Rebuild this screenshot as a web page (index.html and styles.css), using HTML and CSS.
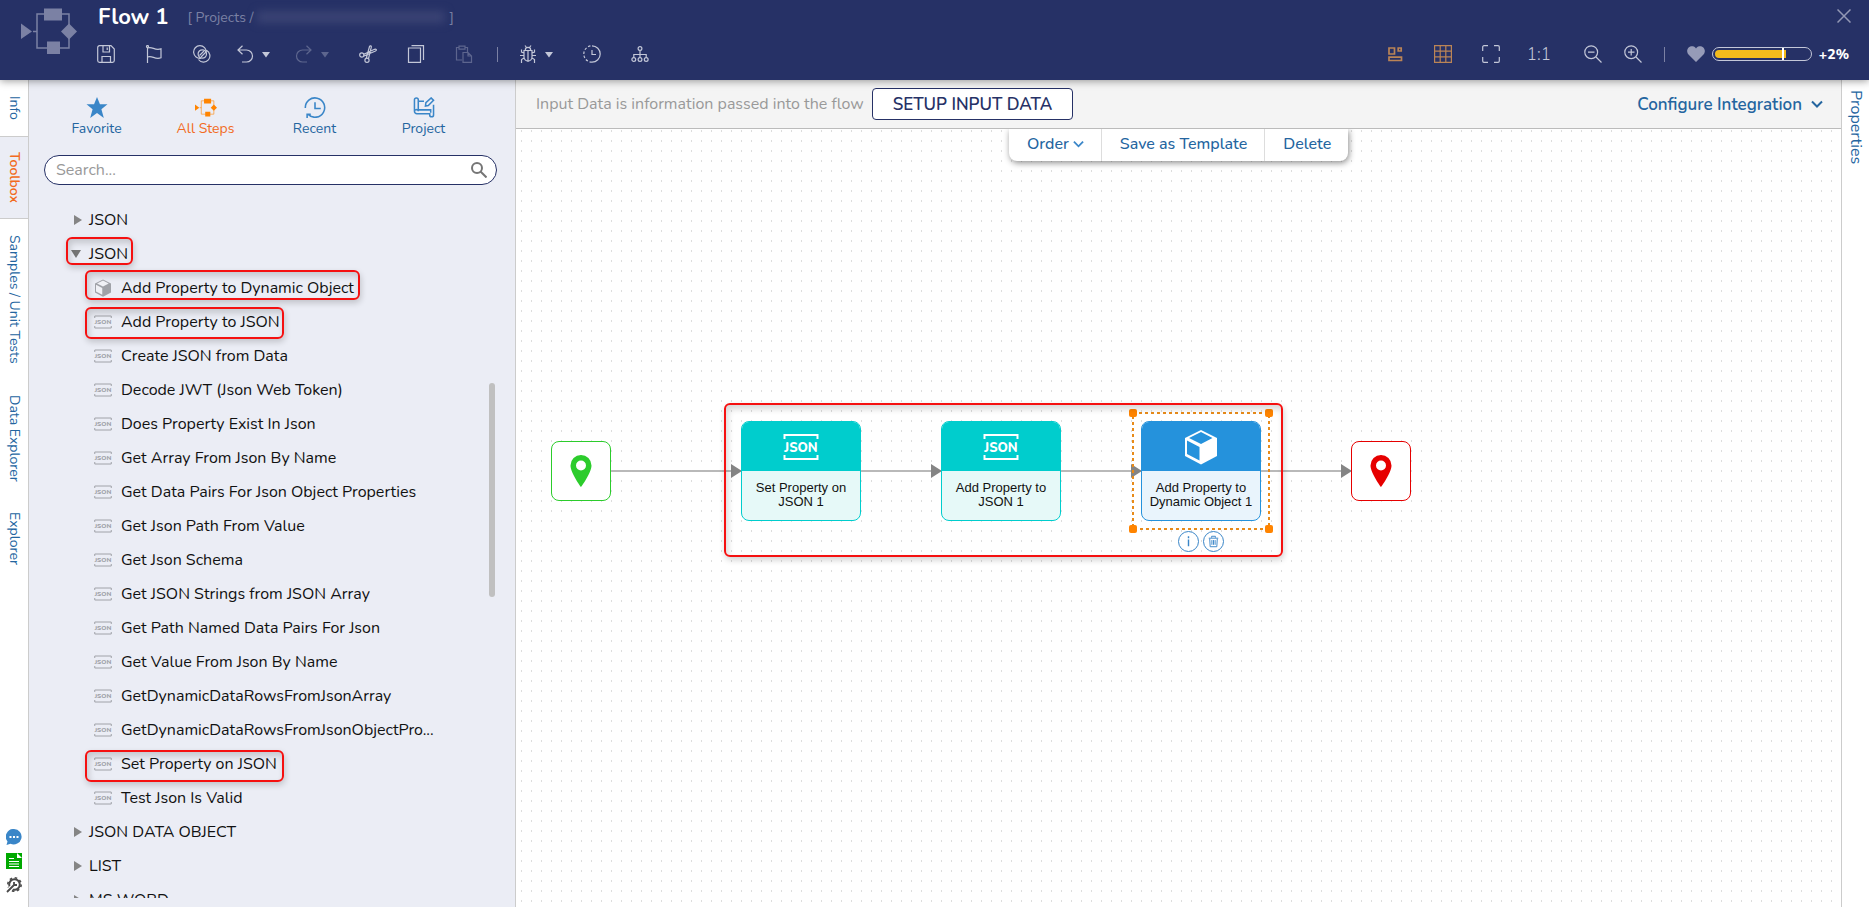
FILE: index.html
```html
<!DOCTYPE html>
<html lang="en">
<head>
  <meta charset="UTF-8">
  <title>Flow 1</title>
  <meta name="viewport" content="width=device-width, initial-scale=1.0">
  <link rel="stylesheet" href="styles.css">
</head>
<body>
  <!-- shared icons -->
  <svg class="sprite" aria-hidden="true">
    <symbol id="i-flow" viewBox="0 0 56 46">
      <path d="M12 23.500H16V6H48V40H16V23" fill="none" stroke="currentColor" stroke-width="1.500"/>
      <path d="M0 15.500 11 23.500 0 31zM23 .5h18v12H23zM26 33.500h13V46H26zM48 15.500l8 8-8 8-8-8z" fill="currentColor"/>
    </symbol>
    <symbol id="i-json" viewBox="0 0 36 28">
      <path d="M1.500 6V2H34.500V6M1.500 22V26H34.500V22" fill="none" stroke="currentColor" stroke-width="2"/>
      <text x="18" y="18.500" text-anchor="middle" font-size="13" font-weight="800" fill="currentColor">JSON</text>
    </symbol>
    <symbol id="i-cube" viewBox="0 0 36 36">
      <path d="M18 1 34 9V27L18 35.500 2 27V9z" fill="currentColor"/>
      <path class="cube-face" d="M18 3 29.500 9 18 15 6 9zM4 11.500 16.500 18V31.500L4 25z"/>
    </symbol>
    <symbol id="i-caret" viewBox="0 0 10 7"><path d="M1 1h8L5 6.500z" fill="currentColor"/></symbol>
    <symbol id="i-chevron" viewBox="0 0 12 8"><path d="M1 1.500 6 6.500 11 1.500" fill="none" stroke="currentColor" stroke-width="2"/></symbol>
    <symbol id="i-pin" viewBox="0 0 22 32"><path fill-rule="evenodd" d="M11 0A10.500 10.500 0 0 0 .5 10.500C.5 18 11 32 11 32S21.500 18 21.500 10.500A10.500 10.500 0 0 0 11 0zM11 5.500a5 5 0 1 1 0 10 5 5 0 0 1 0-10z" fill="currentColor"/></symbol>
  </svg>

  <header class="header">
    <svg class="logo"><use href="#i-flow"/></svg>
    <div class="header-main">
      <div class="title-row">
        <h1>Flow 1</h1>
        <div class="breadcrumb">[ Projects / <span class="redacted"></span> ]</div>
        <button class="close-btn" aria-label="Close"><svg viewBox="0 0 14 14"><path d="M.5.5l13 13M13.500.5l-13 13"/></svg></button>
      </div>

      <div class="toolbar">
        <button class="tool" aria-label="Save"><svg viewBox="0 0 18 18"><path d="M.7 2.500A1.800 1.800 0 0 1 2.500.7H14l3.300 3.300v11.500a1.800 1.800 0 0 1-1.800 1.800h-13a1.800 1.800 0 0 1-1.800-1.800zM6 .7V7h6.500V.7M10.200 2.500V5M5 17v-5.500h8.500V17"/></svg></button>
        <button class="tool" aria-label="Flag"><svg viewBox="0 0 18 18"><path d="M2.500 2v16M2.500 3c5-2 7 3 13.500.8v9c-6.500 2.200-8.500-2.800-13.500-.8"/><circle cx="2.500" cy="1.500" r="1"/></svg></button>
        <button class="tool" aria-label="Compare"><svg viewBox="0 0 18 18"><path d="M8 13.200A6.300 6.300 0 1 1 13.200 7.500M13.500 5.200A6.300 6.300 0 1 1 5.500 14.500"/><circle cx="9.300" cy="9" r="4.200"/><path d="M6.500 10.500l4.500-4.500M8 12l5-5"/></svg></button>
        <div class="tool-group">
          <button class="tool" aria-label="Undo"><svg viewBox="0 0 18 18"><path d="M6.500.8 2 5l4.500 4.200M2 5h8.500a6 6 0 0 1 0 12H6"/></svg></button>
          <button class="drop" aria-label="Undo history"><svg><use href="#i-caret"/></svg></button>
        </div>
        <div class="tool-group">
          <button class="tool" aria-label="Redo" disabled><svg viewBox="0 0 18 18"><path d="M11.500.8 16 5l-4.500 4.200M16 5H7.500a6 6 0 0 0 0 12H12"/></svg></button>
          <button class="drop" aria-label="Redo history" disabled><svg><use href="#i-caret"/></svg></button>
        </div>
        <button class="tool" aria-label="Cut"><svg viewBox="0 0 18 18"><circle cx="2.800" cy="10" r="2.100"/><circle cx="8" cy="15.200" r="2.100"/><path d="M4.800 9.300 15.500 4.300c1.800-.4 2.500.8 1 1.700L4.900 11M7.300 13.200 10.500 1.500c.6-1.300 2-.7 1.800.7L9.500 13.600"/></svg></button>
        <button class="tool" aria-label="Copy"><svg viewBox="0 0 18 18"><path d="M1.500 3h12v14.300h-12zM4.500.7h12V15"/></svg></button>
        <button class="tool" aria-label="Paste" disabled><svg viewBox="0 0 18 18"><path d="M7 15H1.500V2.500H4M10 2.500h2.500V7M4 1.200h6v3H4zM8 7.500h5l3.500 3.500v6.300H8zM13 7.500V11h3.500"/></svg></button>
        <span class="sep"></span>
        <div class="tool-group">
          <button class="tool" aria-label="Debug"><svg viewBox="0 0 18 18"><path d="M9 5v12M5 5.500h8v6.500a4 4 0 0 1-8 0zM6.300 5a2.700 2.700 0 0 1 5.400 0M6 .5l1.500 2M12 .5l-1.500 2M5 8 2.500 7V4.500M5 10.500H1M5 13l-2.500 1.500V18M13 8l2.500-1V4.500M13 10.500h4M13 13l2.500 1.500V18"/></svg></button>
          <button class="drop" aria-label="Debug options"><svg><use href="#i-caret"/></svg></button>
        </div>
        <button class="tool" aria-label="History"><svg viewBox="0 0 18 18"><path d="M9 .8a8.200 8.200 0 0 1 0 16.400"/><path d="M9 17.200A8.200 8.200 0 0 1 9 .8" stroke-dasharray="2.500 1.800"/><path d="M9 5v4.500h4"/></svg></button>
        <button class="tool" aria-label="Dependencies"><svg viewBox="0 0 18 18"><circle cx="9" cy="3.500" r="1.900"/><circle cx="2.800" cy="14.500" r="1.900"/><circle cx="9" cy="14.500" r="1.900"/><circle cx="15.200" cy="14.500" r="1.900"/><path d="M9 5.500v7M2.800 12.500V9.500h12.400v3"/></svg></button>

        <div class="toolbar-right">
          <button class="tool tool-on" aria-label="Layout"><svg viewBox="0 0 18 18"><path d="M3 3h5.500v6H3zM12.200 3h3v3h-3zM3 12.200h12.500V15.500H3z" stroke-width="1.700"/></svg></button>
          <button class="tool tool-on" aria-label="Grid"><svg viewBox="0 0 18 18"><path d="M.6.6h16.800v16.800H.6zM6.200.6v16.800M11.800.6v16.800M.6 6.200h16.800M.6 11.800h16.800"/></svg></button>
          <button class="tool" aria-label="Fit to screen"><svg viewBox="0 0 18 18"><path d="M.7 6V2A1.300 1.300 0 0 1 2 .7h4M12 .7h4A1.300 1.300 0 0 1 17.300 2v4M17.300 12v4a1.300 1.300 0 0 1-1.300 1.300h-4M6 17.300H2A1.300 1.300 0 0 1 .7 16v-4"/></svg></button>
          <button class="tool ratio">1:1</button>
          <div class="zoom-group">
            <button class="tool" aria-label="Zoom out"><svg viewBox="0 0 18 18"><circle cx="7.200" cy="7.200" r="6.400"/><path d="M12 12l5.500 5.500M4 7.200h6.500"/></svg></button>
            <button class="tool" aria-label="Zoom in"><svg viewBox="0 0 18 18"><circle cx="7.200" cy="7.200" r="6.400"/><path d="M12 12l5.500 5.500M4 7.200h6.500M7.200 4v6.500"/></svg></button>
          </div>
          <span class="sep"></span>
          <div class="health">
            <svg class="heart" viewBox="0 0 18 16"><path d="M9 16 1.500 8.500C-2 4 2-.5 6 .3 8 .8 9 2.500 9 2.500S10 .8 12 .3c4-.8 8 3.700 4.500 8.200z"/></svg>
            <div class="meter"><div class="meter-fill" style="width: 76%"></div></div>
            <span class="health-value">+2%</span>
          </div>
        </div>
      </div>
    </div>
  </header>

  <div class="workspace">
    <nav class="side-tabs">
      <button class="side-tab">Info</button>
      <button class="side-tab active">Toolbox</button>
      <button class="side-tab">Samples / Unit Tests</button>
      <button class="side-tab">Data Explorer</button>
      <button class="side-tab">Explorer</button>
      <div class="side-tools">
        <button aria-label="Chat"><svg viewBox="0 0 16 16"><path d="M8 0a8 7.700 0 1 1-3.500 14.800L.5 16l1-3.500A7.700 7.700 0 0 1 8 0z" fill="#3a86c8"/><path d="M3.500 8h2M7 8h2M10.500 8h2" stroke="#fff" stroke-width="2"/></svg></button>
        <button aria-label="Notes"><svg viewBox="0 0 16 16"><path d="M0 0h16v16H0z" fill="#00a900"/><path d="M11 0v5h5z" fill="#fff"/><path d="M3 5.500h5M3 8.500h10M3 11h10M3 13.500h10" stroke="#fff"/></svg></button>
        <button aria-label="Settings"><svg viewBox="0 0 16 16"><circle cx="8.500" cy="7.500" r="5.300" fill="none" stroke="#4a4a4a" stroke-width="2"/><circle cx="8.500" cy="7.500" r="6.700" fill="none" stroke="#4a4a4a" stroke-width="1.600" stroke-dasharray="2.600 2.660"/><path d="M.8 15.200 6 10" stroke="#fff" stroke-width="4.500"/><path d="M1 15 8.500 7.500M8 5v3h3" fill="none" stroke="#4a4a4a" stroke-width="1.800"/></svg></button>
      </div>
    </nav>

    <aside class="toolbox">
      <div class="filters">
        <button class="filter"><svg viewBox="0 0 20 20"><path d="M10 0l2.800 7H20l-5.800 4.700L16.500 20 10 15.200 3.500 20l2.300-8.300L0 7h7.200z" fill="currentColor"/></svg>Favorite</button>
        <button class="filter active"><svg><use href="#i-flow"/></svg>All Steps</button>
        <button class="filter"><svg viewBox="0 0 20 20"><path d="M.8 10.500A9.200 9.200 0 1 1 3.500 16.600M2.500 20v-3.500H6M10 5v6h5.500" fill="none" stroke="currentColor" stroke-width="1.500"/></svg>Recent</button>
        <button class="filter"><svg viewBox="0 0 22 22"><path d="M5 15V3a2 2 0 0 0-4 0v12a2.500 2.500 0 0 0 2.500 2.500H17v1.300a2 2 0 0 0 4 0V8M5 4.500h6M1 15a2 2 0 0 1 3-1.500h14v3M12.500 9.500 13 6l5.500-5 2.500 2.500L15.500 9z" fill="none" stroke="currentColor" stroke-width="1.600"/></svg>Project</button>
      </div>

      <div class="search">
        <input type="text" placeholder="Search..." aria-label="Search steps">
        <svg viewBox="0 0 16 16"><circle cx="6" cy="6" r="5"/><path d="M9.500 9.500l6 6"/></svg>
      </div>

      <div class="tree">
        <div class="folder">JSON</div>
        <div class="folder open">JSON</div>
        <div class="step"><svg class="cube"><use href="#i-cube"/></svg>Add Property to Dynamic Object</div>
        <div class="step"><svg><use href="#i-json"/></svg>Add Property to JSON</div>
        <div class="step"><svg><use href="#i-json"/></svg>Create JSON from Data</div>
        <div class="step"><svg><use href="#i-json"/></svg>Decode JWT (Json Web Token)</div>
        <div class="step"><svg><use href="#i-json"/></svg>Does Property Exist In Json</div>
        <div class="step"><svg><use href="#i-json"/></svg>Get Array From Json By Name</div>
        <div class="step"><svg><use href="#i-json"/></svg>Get Data Pairs For Json Object Properties</div>
        <div class="step"><svg><use href="#i-json"/></svg>Get Json Path From Value</div>
        <div class="step"><svg><use href="#i-json"/></svg>Get Json Schema</div>
        <div class="step"><svg><use href="#i-json"/></svg>Get JSON Strings from JSON Array</div>
        <div class="step"><svg><use href="#i-json"/></svg>Get Path Named Data Pairs For Json</div>
        <div class="step"><svg><use href="#i-json"/></svg>Get Value From Json By Name</div>
        <div class="step"><svg><use href="#i-json"/></svg>GetDynamicDataRowsFromJsonArray</div>
        <div class="step"><svg><use href="#i-json"/></svg>GetDynamicDataRowsFromJsonObjectPro...</div>
        <div class="step"><svg><use href="#i-json"/></svg>Set Property on JSON</div>
        <div class="step"><svg><use href="#i-json"/></svg>Test Json Is Valid</div>
        <div class="folder">JSON DATA OBJECT</div>
        <div class="folder">LIST</div>
        <div class="folder">MS WORD</div>
        <div class="callout callout-folder"></div>
        <div class="callout callout-dynamic"></div>
        <div class="callout callout-add"></div>
        <div class="callout callout-set"></div>
        <div class="scroll-thumb"></div>
      </div>
    </aside>

    <main class="designer">
      <div class="input-bar">
        <span class="hint">Input Data is information passed into the flow</span>
        <button class="setup-btn">SETUP INPUT DATA</button>
        <button class="configure-btn">Configure Integration <svg><use href="#i-chevron"/></svg></button>
      </div>

      <div class="canvas">
        <div class="context-bar">
          <button>Order <svg><use href="#i-chevron"/></svg></button>
          <button>Save as Template</button>
          <button>Delete</button>
        </div>

        <svg class="links">
          <path d="M95 342H225M345 342H425M545 342H625M745 342H835" stroke="#b9b9b9" stroke-width="2"/>
          <path d="M215 335l11 7-11 7zM415 335l11 7-11 7zM615 335l11 7-11 7zM825 335l11 7-11 7z" fill="#858585"/>
        </svg>

        <div class="terminal start"><svg><use href="#i-pin"/></svg></div>
        <div class="node node-set">
          <div class="node-head"><svg><use href="#i-json"/></svg></div>
          <div class="node-name">Set Property on<br>JSON 1</div>
        </div>
        <div class="node node-add">
          <div class="node-head"><svg><use href="#i-json"/></svg></div>
          <div class="node-name">Add Property to<br>JSON 1</div>
        </div>
        <div class="node node-dynamic">
          <div class="node-head"><svg class="cube"><use href="#i-cube"/></svg></div>
          <div class="node-name">Add Property to<br>Dynamic Object 1</div>
        </div>
        <div class="terminal end"><svg><use href="#i-pin"/></svg></div>

        <svg class="selection" viewBox="0 0 144 124">
          <rect x="4" y="4" width="136" height="116" fill="none" stroke="#e88b1a" stroke-width="2" stroke-dasharray="3 3"/>
          <g fill="#ff8400"><rect width="8" height="8" rx="2"/><rect x="136" width="8" height="8" rx="2"/><rect y="116" width="8" height="8" rx="2"/><rect x="136" y="116" width="8" height="8" rx="2"/></g>
        </svg>
        <div class="node-actions">
          <button aria-label="Info"><svg viewBox="0 0 20 20"><path d="M10 8v7M10 4.500v2" stroke-width="1.500"/></svg></button>
          <button aria-label="Delete step"><svg viewBox="0 0 20 20"><path d="M5 6.500h10M8 6V4.500h4V6M6 7l.5 8.500h7L14 7M8.300 8.500v5M10 8.500v5M11.700 8.500v5"/></svg></button>
        </div>
        <div class="callout callout-nodes"></div>
      </div>
    </main>

    <nav class="right-tabs">
      <button class="side-tab">Properties</button>
    </nav>
  </div>
</body>
</html>
```
FILE: styles.css
```css
* {
  box-sizing: border-box;
}
body {
  margin: 0;
  height: 100vh;
  display: flex;
  flex-direction: column;
  overflow: hidden;
  font-family: 'Nunito', 'Open Sans', sans-serif;
  font-size: 16px;
  color: #111;
}
button {
  border: none;
  background: none;
  padding: 0;
  margin: 0;
  font: inherit;
  color: inherit;
  cursor: pointer;
}
.sprite {
  position: absolute;
  width: 0;
  height: 0;
}

/* header */
.header {
  position: relative;
  z-index: 5;
  display: flex;
  height: 80px;
  flex: none;
  background: #263166;
  color: #c3c7d8;
  box-shadow: 0 1px 8px rgba(0, 0, 0, 0.4);
}
.logo {
  width: 56px;
  height: 46px;
  margin: 8px 5px 0 21px;
  color: #7b81a4;
}
.header-main {
  flex: 1;
}
.title-row {
  display: flex;
  align-items: center;
  height: 34px;
  padding: 0 18px 0 16px;
}
.title-row h1 {
  margin: 0;
  font-size: 22px;
  line-height: 34px;
  font-weight: 700;
  color: #fff;
}
.breadcrumb {
  display: flex;
  align-items: center;
  gap: 4px;
  margin-left: 19px;
  font-size: 14px;
  color: #7b81a4;
}
.redacted {
  width: 188px;
  height: 12px;
  background: #3a4374;
  filter: blur(4px);
}
.close-btn {
  width: 14px;
  height: 14px;
  margin: 0 0 2px auto;
}
.close-btn svg {
  display: block;
  fill: none;
  stroke: #9398b4;
  stroke-width: 1.5;
}
.toolbar {
  display: flex;
  align-items: center;
  height: 40px;
}
.tool {
  display: flex;
  align-items: center;
  justify-content: center;
  width: 48px;
  height: 40px;
}
.tool svg {
  width: 18px;
  height: 18px;
  fill: none;
  stroke: currentColor;
  stroke-width: 1.2;
}
.tool-on {
  color: #bb8456;
}
.tool:disabled, .drop:disabled {
  opacity: 0.35;
}
.tool-group {
  display: flex;
  align-items: center;
  width: 59px;
  padding-left: 10px;
  gap: 7px;
}
.tool-group .tool {
  width: 18px;
}
.drop svg {
  display: block;
  width: 10px;
  height: 7px;
}
.sep {
  width: 1px;
  height: 15px;
  margin: 0 11px 0 9px;
  background: #7b81a4;
}
.toolbar-right {
  display: flex;
  align-items: center;
  margin-left: auto;
  padding-right: 20px;
}
.toolbar-right .sep {
  margin: 0 22px 0 11px;
}
.ratio {
  font-size: 17px;
  font-weight: 300;
}
.zoom-group {
  display: flex;
  margin-left: 10px;
}
.zoom-group .tool {
  width: 40px;
}
.health {
  display: flex;
  align-items: center;
  gap: 7px;
}
.heart {
  width: 18px;
  height: 16px;
  fill: #969bb8;
}
.meter {
  width: 100px;
  height: 14px;
  padding: 2px;
  border: 1px solid #c3c7d8;
  border-radius: 7px;
}
.meter-fill {
  position: relative;
  height: 8px;
  background: #f3bb1c;
  border-radius: 4px 0 0 4px;
}
.meter-fill::after {
  content: '';
  position: absolute;
  right: 2px;
  top: -2px;
  width: 2px;
  height: 12px;
  background: #fff;
}
.health-value {
  font-size: 14px;
  font-weight: 800;
  color: #fff;
}

/* workspace */
.workspace {
  flex: 1;
  min-height: 0;
  display: flex;
}
.side-tabs {
  display: flex;
  flex-direction: column;
  gap: 1px;
  width: 29px;
  padding-top: 1px;
  border-right: 1px solid #ccc;
}
.side-tab {
  writing-mode: vertical-rl;
  width: 28px;
  padding: 15px 0;
  font-size: 14px;
  line-height: 26px;
  color: #24659f;
  text-align: left;
}
.side-tab.active {
  background: #ebedf5;
  border-top: 1px solid #ccc;
  border-bottom: 1px solid #ccc;
  color: #f26a21;
  font-weight: 600;
}
.side-tools {
  display: flex;
  flex-direction: column;
  align-items: center;
  gap: 8px;
  margin-top: auto;
  padding-bottom: 14px;
}
.side-tools button {
  width: 16px;
  height: 16px;
}
.side-tools svg {
  display: block;
}
.toolbox {
  display: flex;
  flex-direction: column;
  width: 487px;
  padding-bottom: 9px;
  background: #ebedf5;
  border-right: 1px solid #ccc;
}
.filters {
  display: flex;
  padding: 17px 37px 0 13px;
}
.filter {
  flex: 1;
  display: flex;
  flex-direction: column;
  align-items: center;
  gap: 1px;
  font-size: 14px;
  line-height: 20px;
  color: #24659f;
}
.filter svg {
  width: 22px;
  height: 21px;
  color: #3a86c8;
}
.filter.active {
  color: #f26a21;
}
.filter.active svg {
  color: #ff8400;
}
.search {
  position: relative;
  margin: 16px 18px 18px 15px;
}
.search input {
  display: block;
  width: 100%;
  height: 30px;
  padding: 0 40px 0 11px;
  border: 1px solid #263166;
  border-radius: 15px;
  font: inherit;
  background: #fff;
}
.search input::placeholder {
  color: #999;
}
.search svg {
  position: absolute;
  right: 10px;
  top: 7px;
  width: 16px;
  height: 16px;
  fill: none;
  stroke: #757575;
  stroke-width: 2;
}
.tree {
  position: relative;
  flex: 1;
  min-height: 0;
  overflow: hidden;
}
.folder, .step {
  display: flex;
  align-items: center;
  height: 34px;
  white-space: nowrap;
}
.folder {
  padding-left: 45px;
}
.folder::before {
  content: '';
  width: 0;
  margin-right: 7px;
  border: 5px solid transparent;
  border-left: 8px solid #858585;
  border-right: 0;
}
.folder.open {
  padding-left: 42px;
}
.folder.open::before {
  border: 5px solid transparent;
  border-top: 8px solid #757575;
  border-bottom: 0;
  margin-right: 8px;
}
.step {
  padding-left: 65px;
  gap: 9px;
}
.step svg {
  width: 18px;
  height: 14px;
  color: #a0a2a8;
}
.step .cube {
  height: 18px;
}
.callout {
  position: absolute;
  border: 2px solid #f51010;
  border-radius: 6px;
  pointer-events: none;
  box-shadow: 1px 3px 6px rgba(0, 0, 0, 0.18), inset 2px 4px 6px rgba(0, 0, 0, 0.16);
}
.callout-folder {
  left: 37px;
  top: 34px;
  width: 67px;
  height: 28px;
}
.callout-dynamic {
  left: 56px;
  top: 67px;
  width: 275px;
  height: 30px;
}
.callout-add, .callout-set {
  left: 56px;
  top: 104px;
  width: 199px;
  height: 32px;
}
.callout-set {
  top: 547px;
}
.scroll-thumb {
  position: absolute;
  right: 20px;
  top: 180px;
  width: 6px;
  height: 214px;
  border-radius: 3px;
  background: #c0c0c0;
}

/* designer */
.designer {
  flex: 1;
  min-width: 0;
  display: flex;
  flex-direction: column;
}
.input-bar {
  display: flex;
  align-items: center;
  height: 49px;
  padding: 0 18px 0 20px;
  background: #f4f4f4;
  border-bottom: 1px solid #bbb;
}
.hint {
  color: #999;
}
.setup-btn {
  height: 32px;
  margin-left: 8px;
  padding: 0 20px;
  border: 1px solid #263166;
  border-radius: 4px;
  background: #fff;
  color: #263166;
  font-size: 17px;
  font-weight: 600;
}
.configure-btn {
  display: flex;
  align-items: center;
  gap: 9px;
  margin-left: auto;
  color: #24659f;
  font-size: 17px;
  font-weight: 600;
}
.configure-btn svg {
  width: 12px;
  height: 8px;
}
.canvas {
  position: relative;
  flex: 1;
  overflow: hidden;
  background-color: #fff;
  background-image: conic-gradient(at 1px 2px, transparent 75%, #ddd 0);
  background-size: 10px 10px;
  background-position: 5px 11px;
}
.context-bar {
  position: absolute;
  left: 493px;
  top: 0;
  display: flex;
  height: 32px;
  border-radius: 0 0 8px 8px;
  background: #fff;
  box-shadow: 1px 2px 6px rgba(0, 0, 0, 0.45);
}
.context-bar button {
  display: flex;
  align-items: center;
  gap: 4px;
  padding: 0 17px 2px 18px;
  color: #24659f;
  font-weight: 500;
}
.context-bar button + button {
  border-left: 1px solid #ddd;
}
.context-bar svg {
  width: 11px;
  height: 8px;
  color: #3a86c8;
}
.links {
  position: absolute;
  left: 0;
  top: 0;
  width: 100%;
  height: 100%;
}
.terminal, .node {
  position: absolute;
  background: #fff;
  border: 1px solid;
  border-radius: 8px;
}
.terminal {
  top: 312px;
  display: grid;
  place-items: center;
  width: 60px;
  height: 60px;
}
.terminal svg {
  width: 22px;
  height: 32px;
}
.start {
  left: 35px;
  color: #2ccc2c;
}
.end {
  left: 835px;
  color: #e60000;
}
.node {
  top: 292px;
  width: 120px;
  height: 100px;
  overflow: hidden;
  border-color: #00cdcd;
  background: #e6f9f8;
}
.node-set {
  left: 225px;
}
.node-add {
  left: 425px;
}
.node-dynamic {
  left: 625px;
  border-color: #2592dc;
  background: #e9f4fc;
}
.node-head {
  display: grid;
  place-items: center;
  height: 49px;
  background: #00cdcd;
  color: #fff;
}
.node-head svg {
  width: 36px;
  height: 28px;
}
.node-head .cube {
  width: 36px;
  height: 36px;
}
.node-dynamic .node-head {
  background: #2592dc;
}
.node-dynamic .cube {
  --face: #2592dc;
}
.cube-face {
  fill: var(--face, #f0f1f6);
}
.node-name {
  padding-top: 10px;
  font: 13px/14px 'Liberation Sans', Arial, sans-serif;
  text-align: center;
  color: #111;
}
.selection {
  position: absolute;
  left: 613px;
  top: 280px;
  width: 144px;
  height: 124px;
}
.node-actions {
  position: absolute;
  left: 662px;
  top: 402px;
  display: flex;
  gap: 4px;
}
.node-actions button {
  width: 21px;
  height: 21px;
  border: 1px solid #3a86c8;
  border-radius: 50%;
  background: #fff;
}
.node-actions svg {
  display: block;
  fill: none;
  stroke: #3a86c8;
}
.callout-nodes {
  left: 208px;
  top: 274px;
  width: 559px;
  height: 154px;
}
.right-tabs {
  width: 28px;
  border-left: 1px solid #ccc;
}
.right-tabs .side-tab {
  padding: 10px 0;
  font-size: 16px;
}
```
